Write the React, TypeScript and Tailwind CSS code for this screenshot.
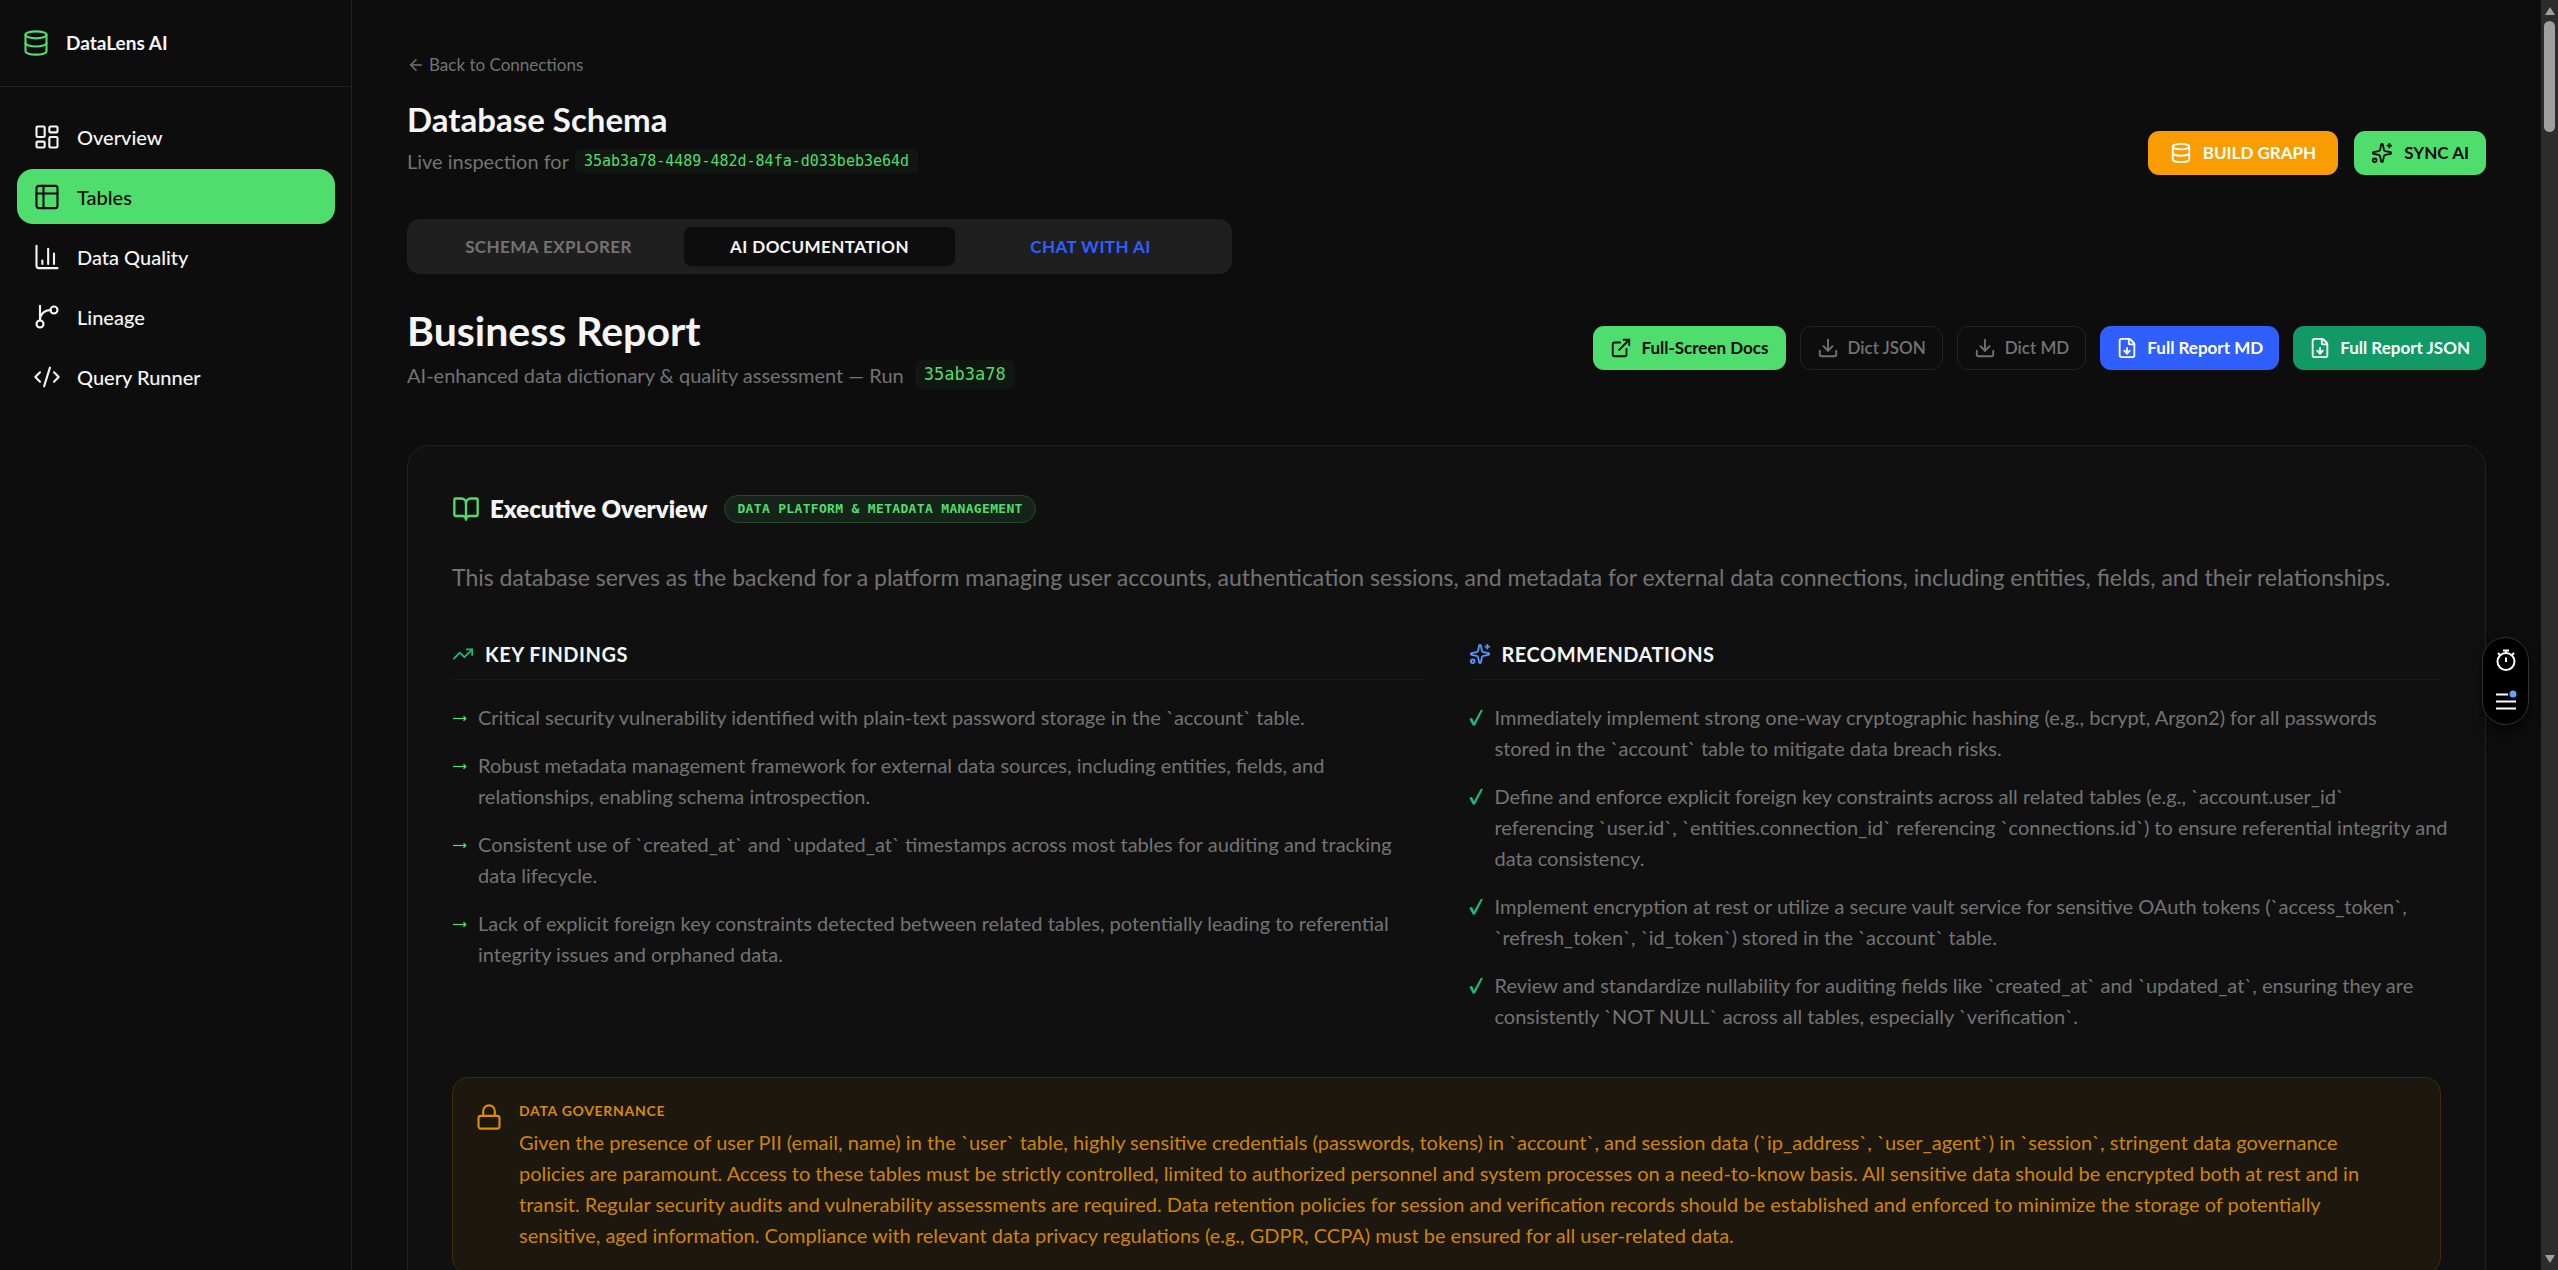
import type { ReactNode } from "react";
import {
  ArrowLeft,
  BookOpen,
  CodeXml,
  Database,
  Download,
  ExternalLink,
  FileDown,
  LayoutDashboard,
  Lock,
  Sparkles,
  TrendingUp,
} from "lucide-react";

const iconBase = {
  viewBox: "0 0 24 24",
  fill: "none",
  stroke: "currentColor",
  strokeWidth: 1.8,
  strokeLinecap: "round" as const,
  strokeLinejoin: "round" as const,
};

function TableIcon() {
  return (
    <svg {...iconBase} className="size-7">
      <rect x="3" y="2.5" width="18" height="19" rx="2" />
      <path d="M3 9h18M9 2.5v19" />
    </svg>
  );
}

function ChartIcon() {
  return (
    <svg {...iconBase} className="size-7">
      <path d="M3 2.5v17a2 2 0 0 0 2 2h16M8 18v-3M13 18V5M18 18V9" />
    </svg>
  );
}

function BranchIcon() {
  return (
    <svg {...iconBase} className="size-7">
      <circle cx="18" cy="6" r="3" />
      <circle cx="6" cy="18" r="3" />
      <path d="M6 2.5V15M15 6c-5 0-9 3.5-9 9" />
    </svg>
  );
}

function ArrowMark() {
  return (
    <svg viewBox="0 0 15 31" fill="none" stroke="#4fdd6d" strokeWidth="1.2" className="h-[31px] w-[15px] shrink-0">
      <path d="M1 16.5h12.5" />
      <path d="M11.5 14.3l2.2 2.2l-2.2 2.2" strokeWidth="1.4" />
    </svg>
  );
}

function CheckMark() {
  return (
    <svg viewBox="0 0 15 31" className="h-[31px] w-[15px] shrink-0">
      <path
        d="M0.6 17.6C0.4 16.4 2.6 15.4 3.3 16.6L5 20.2L11.4 8.4C11.9 7.5 14.3 7.4 13.7 8.5L6.3 23C5.8 24 3.9 24 3.5 23Z"
        fill="#19b97c"
      />
    </svg>
  );
}

const navItems: { label: string; icon: ReactNode; active?: boolean }[] = [
  { label: "Overview", icon: <LayoutDashboard className="size-7" strokeWidth={1.8} /> },
  { label: "Tables", icon: <TableIcon />, active: true },
  { label: "Data Quality", icon: <ChartIcon /> },
  { label: "Lineage", icon: <BranchIcon /> },
  { label: "Query Runner", icon: <CodeXml className="size-7" strokeWidth={1.8} /> },
];

const findings = [
  "Critical security vulnerability identified with plain-text password storage in the `account` table.",
  "Robust metadata management framework for external data sources, including entities, fields, and relationships, enabling schema introspection.",
  "Consistent use of `created_at` and `updated_at` timestamps across most tables for auditing and tracking data lifecycle.",
  "Lack of explicit foreign key constraints detected between related tables, potentially leading to referential integrity issues and orphaned data.",
];

const recommendations = [
  "Immediately implement strong one-way cryptographic hashing (e.g., bcrypt, Argon2) for all passwords\nstored in the `account` table to mitigate data breach risks.",
  "Define and enforce explicit foreign key constraints across all related tables (e.g., `account.user_id`\nreferencing `user.id`, `entities.connection_id` referencing `connections.id`) to ensure referential integrity and data consistency.",
  "Implement encryption at rest or utilize a secure vault service for sensitive OAuth tokens (`access_token`, `refresh_token`, `id_token`) stored in the `account` table.",
  "Review and standardize nullability for auditing fields like `created_at` and `updated_at`, ensuring they are consistently `NOT NULL` across all tables, especially `verification`.",
];

const governance = [
  "Given the presence of user PII (email, name) in the `user` table, highly sensitive credentials (passwords, tokens) in `account`, and session data (`ip_address`, `user_agent`) in `session`, stringent data governance",
  "policies are paramount. Access to these tables must be strictly controlled, limited to authorized personnel and system processes on a need-to-know basis. All sensitive data should be encrypted both at rest and in",
  "transit. Regular security audits and vulnerability assessments are required. Data retention policies for session and verification records should be established and enforced to minimize the storage of potentially",
  "sensitive, aged information. Compliance with relevant data privacy regulations (e.g., GDPR, CCPA) must be ensured for all user-related data.",
].join("\n");

function Sidebar() {
  return (
    <aside className="flex w-[352px] shrink-0 flex-col border-r border-[#222222]">
      <div className="flex h-[87px] items-center gap-4 border-b border-[#222222] px-[22px]">
        <Database className="size-7 text-[#4fdd6d]" strokeWidth={1.8} />
        <span className="text-[19px] font-bold text-[#f5f5f5]">DataLens AI</span>
      </div>
      <nav className="flex flex-col gap-[5px] pt-[22px] pr-4 pl-[17px]">
        {navItems.map((item) => (
          <a
            key={item.label}
            href="#"
            aria-current={item.active ? "page" : undefined}
            className={
              item.active
                ? "flex h-[55px] items-center gap-4 rounded-2xl bg-[#4fdd6d] px-4 text-[20px] font-medium text-[#0a0a0a]"
                : "flex h-[55px] items-center gap-4 rounded-2xl px-4 text-[20px] font-medium text-[#f5f5f5]"
            }
          >
            {item.icon}
            {item.label}
          </a>
        ))}
      </nav>
    </aside>
  );
}

function ActionButton({ className, icon, children }: { className: string; icon: ReactNode; children: ReactNode }) {
  return (
    <button className={`flex h-11 items-center rounded-[11px] text-[17px] ${className}`}>
      {icon}
      {children}
    </button>
  );
}

function ItemList({ items, mark }: { items: string[]; mark: ReactNode }) {
  return (
    <ul className="mt-[22px] -mr-2 flex flex-col gap-[17px] text-[20px] leading-[31px] text-[#737373]">
      {items.map((text) => (
        <li key={text} className="flex gap-[11px]">
          {mark}
          <span className="whitespace-pre-line">{text}</span>
        </li>
      ))}
    </ul>
  );
}

function SectionTitle({ icon, children }: { icon: ReactNode; children: ReactNode }) {
  return (
    <h3 className="flex items-center gap-[11px] border-b border-[#191919] pb-[11px] text-[20px] leading-7 font-bold tracking-wide text-[#f5f5f5]">
      {icon}
      {children}
    </h3>
  );
}

function FloatingTools() {
  return (
    <div className="absolute top-[637px] right-[29px] flex h-[88px] w-[47px] flex-col items-center justify-between rounded-full border border-[#333333] bg-black px-2 pt-[10px] pb-[14px] shadow-lg shadow-black/50">
      <button aria-label="Timer" className="text-white">
        <svg viewBox="0 0 24 24" fill="none" stroke="currentColor" strokeWidth="2" className="size-6">
          <circle cx="12" cy="13.5" r="8.5" />
          <path d="M9 2.5h6M12 2.5v3M12 9.5v4.5M4 5l2 2M20 5l-2 2" />
        </svg>
      </button>
      <button aria-label="Menu">
        <svg viewBox="0 0 22 20" fill="none" className="h-5 w-[22px]">
          <path d="M1 4.5h12M1 11.5h20M1 18.5h20" stroke="#ffffff" strokeWidth="2" />
          <circle cx="18" cy="4" r="3.5" fill="#60a5fa" />
        </svg>
      </button>
    </div>
  );
}

function ScrollTrack() {
  return (
    <div aria-hidden="true" className="flex w-[17px] shrink-0 flex-col items-center justify-between bg-[#2c2c2c] py-[7px]">
      <div className="flex flex-col items-center gap-[6px]">
        <svg viewBox="0 0 10 8" className="h-2 w-[10px]">
          <path d="M5 0l5 8H0z" fill="#9f9f9f" />
        </svg>
        <div className="h-[111px] w-[11px] rounded-full bg-[#9f9f9f]" />
      </div>
      <svg viewBox="0 0 10 8" className="h-2 w-[10px]">
        <path d="M5 8l5-8H0z" fill="#9f9f9f" />
      </svg>
    </div>
  );
}

export default function App() {
  return (
    <div className="relative flex h-screen overflow-hidden bg-[#0d0d0d] font-['Lato','Liberation_Sans',sans-serif]">
      <Sidebar />
      <main className="min-w-0 flex-1 overflow-hidden px-[55px] pt-[53px]">
        <a href="#" className="flex items-center gap-1 text-[17px] leading-6 text-[#737373]">
          <ArrowLeft className="size-[18px]" />
          Back to Connections
        </a>

        <header className="mt-5 flex items-end justify-between">
          <div>
            <h1 className="text-[33px] leading-[44px] font-bold text-[#f5f5f5]">Database Schema</h1>
            <p className="mt-[6px] flex items-center gap-[6px] text-[20px] leading-7 text-[#737373]">
              Live inspection for
              <code className="rounded-[6px] bg-[#101711] px-[9px] font-['DejaVu_Sans_Mono',monospace] text-[15px] leading-6 text-[#4fdd6d]">
                35ab3a78-4489-482d-84fa-d033beb3e64d
              </code>
            </p>
          </div>
          <div className="flex gap-4">
            <ActionButton className="gap-[11px] bg-[#f99c00] px-[22px] font-bold text-white" icon={<Database className="size-[22px]" />}>
              BUILD GRAPH
            </ActionButton>
            <ActionButton className="gap-[11px] bg-[#4fdd6d] px-[17px] font-bold text-[#0a0a0a]" icon={<Sparkles className="size-[22px]" />}>
              SYNC AI
            </ActionButton>
          </div>
        </header>

        <div role="tablist" className="mt-11 grid h-[55px] max-w-[825px] grid-cols-3 items-center rounded-[13px] bg-[#1f1f1f] px-[6px] text-[17px] font-bold tracking-wide">
          <button role="tab" className="h-[39px] text-[#737373]">SCHEMA EXPLORER</button>
          <button role="tab" aria-selected="true" className="h-[39px] rounded-lg bg-[#0d0d0d] text-[#f5f5f5] shadow-sm">AI DOCUMENTATION</button>
          <button role="tab" className="h-[39px] text-[#2f5fff]">CHAT WITH AI</button>
        </div>

        <header className="mt-8 flex items-center justify-between">
          <div>
            <h2 className="text-[41px] leading-[50px] font-bold text-[#f5f5f5]">Business Report</h2>
            <p className="mt-[4px] flex items-center gap-[11px] text-[20px] leading-7 text-[#737373]">
              AI-enhanced data dictionary &amp; quality assessment — Run
              <code className="rounded-[6px] bg-[#101711] px-[9px] font-['DejaVu_Sans_Mono',monospace] text-[17px] leading-[29px] text-[#4fdd6d]">
                35ab3a78
              </code>
            </p>
          </div>
          <div className="flex gap-[14px]">
            <ActionButton className="gap-[9px] bg-[#4fdd6d] px-[17px] font-bold text-[#0a0a0a]" icon={<ExternalLink className="size-[22px]" />}>
              Full-Screen Docs
            </ActionButton>
            <ActionButton className="gap-[9px] border border-[#222222] px-4 font-semibold text-[#737373]" icon={<Download className="size-[22px]" />}>
              Dict JSON
            </ActionButton>
            <ActionButton className="gap-[9px] border border-[#222222] px-4 font-semibold text-[#737373]" icon={<Download className="size-[22px]" />}>
              Dict MD
            </ActionButton>
            <ActionButton className="gap-[9px] bg-[#2f5fff] px-4 font-bold text-white" icon={<FileDown className="size-[22px]" />}>
              Full Report MD
            </ActionButton>
            <ActionButton className="gap-[9px] bg-[#129a66] px-4 font-bold text-white" icon={<FileDown className="size-[22px]" />}>
              Full Report JSON
            </ActionButton>
          </div>
        </header>

        <section className="mt-14 rounded-[22px] border border-[#222222] bg-[#101010] px-11 pt-[46px] pb-11">
          <div className="flex items-center gap-[17px]">
            <h2 className="flex items-center gap-[10px] text-[24px] leading-[33px] font-extrabold text-[#f5f5f5]">
              <BookOpen className="size-7 text-[#4fdd6d]" />
              Executive Overview
            </h2>
            <span className="rounded-full border border-[#1f4a29] bg-[#17231a] px-3 font-['DejaVu_Sans_Mono',monospace] text-[13px] leading-[26px] font-bold tracking-wide text-[#4fdd6d]">
              DATA PLATFORM &amp; METADATA MANAGEMENT
            </span>
          </div>

          <p className="mt-[34px] text-[23px] leading-9 text-[#737373]">
            This database serves as the backend for a platform managing user accounts, authentication sessions, and metadata for
            external data connections, including entities, fields, and their relationships.
          </p>

          <div className="mt-[45px] grid grid-cols-2 gap-11">
            <div>
              <SectionTitle icon={<TrendingUp className="size-[22px] text-[#19b97c]" />}>KEY FINDINGS</SectionTitle>
              <ItemList items={findings} mark={<ArrowMark />} />
            </div>
            <div>
              <SectionTitle icon={<Sparkles className="size-[22px] text-[#5596ff]" />}>RECOMMENDATIONS</SectionTitle>
              <ItemList items={recommendations} mark={<CheckMark />} />
            </div>
          </div>

          <div className="mt-[45px] flex gap-4 rounded-2xl border border-[#402b09] bg-[#1c170f] p-[22px]">
            <Lock className="mt-[3px] size-7 shrink-0 text-[#e08e00]" strokeWidth={1.8} />
            <div>
              <h3 className="text-[14px] leading-[22px] font-bold tracking-wider text-[#d68b00]">DATA GOVERNANCE</h3>
              <p className="mt-[5px] text-[20px] leading-[31px] whitespace-pre-line text-[#cf8500]">{governance}</p>
            </div>
          </div>
        </section>
      </main>
      <ScrollTrack />
      <FloatingTools />
    </div>
  );
}
